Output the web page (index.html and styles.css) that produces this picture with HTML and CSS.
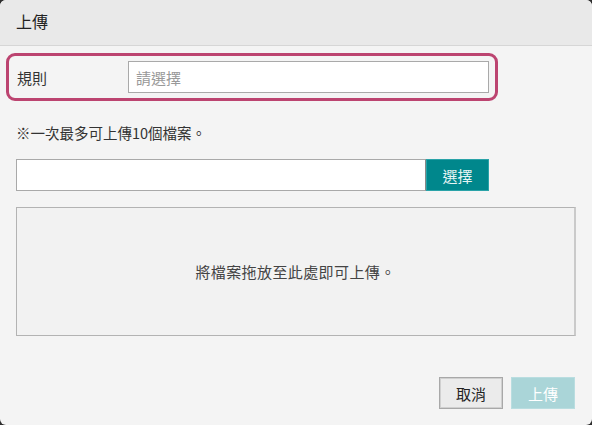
FILE: index.html
```html
<!DOCTYPE html>
<html lang="zh-Hant">
<head>
<meta charset="utf-8">
<title>上傳</title>
<link rel="stylesheet" href="styles.css">
</head>
<body>
<div class="dialog">
  <div class="header"><span class="title">上傳</span></div>
  <div class="content">
    <div class="rule-row">
      <label class="rule-label">規則</label>
      <div class="rule-input">請選擇</div>
    </div>
    <p class="notice">※一次最多可上傳10個檔案。</p>
    <div class="file-row">
      <div class="file-input"></div>
      <button class="choose-btn">選擇</button>
    </div>
    <div class="drop-zone">將檔案拖放至此處即可上傳。</div>
    <div class="footer">
      <button class="btn btn-cancel">取消</button>
      <button class="btn btn-upload">上傳</button>
    </div>
  </div>
</div>
</body>
</html>
```
FILE: styles.css
```css
* { box-sizing: border-box; }
html, body { margin: 0; padding: 0; background: #2e2e2e; }
body {
  font-family: "Noto Sans CJK TC", "Liberation Sans", sans-serif;
  color: #333;
}
.dialog {
  width: 592px;
  height: 425px;
  background: #f4f4f4;
  border-radius: 6px;
  overflow: hidden;
  display: flex;
  flex-direction: column;
}
.header {
  height: 46px;
  background: #e9e9e9;
  border-bottom: 1px solid #d6d6d6;
  display: flex;
  align-items: center;
  padding-left: 16px;
  padding-bottom: 3px;
}
.title { font-size: 16px; color: #222; }
.content {
  padding: 7px 16px 0 16px;
  display: flex;
  flex-direction: column;
}
.rule-row {
  margin-left: -10px;
  width: 492px;
  height: 48px;
  border: 3px solid #bc4470;
  border-radius: 9px;
  display: flex;
  align-items: center;
  padding: 0 6px 0 8px;
}
.rule-label { width: 111px; font-size: 15px; color: #333; }
.rule-input {
  flex: 1;
  height: 32px;
  background: #fff;
  border: 1px solid #a9a9a9;
  font-size: 15px;
  color: #999;
  display: flex;
  align-items: center;
  padding-left: 7px;
}
.notice {
  margin: 22px 0 0 0;
  height: 20px;
  line-height: 20px;
  font-size: 14.5px;
  color: #333;
}
.file-row {
  margin-top: 16px;
  display: flex;
  height: 32px;
}
.file-input {
  width: 410px;
  background: #fff;
  border: 1px solid #a9a9a9;
  border-right-color: #888;
}
.choose-btn {
  width: 63px;
  border: 1px solid #2aa3a8;
  background: #00878c;
  color: #e6f4f4;
  font-family: inherit;
  font-size: 15px;
  font-weight: normal;
  padding: 0;
}
.drop-zone {
  margin-top: 16px;
  width: 560px;
  height: 129px;
  background: #f2f2f2;
  border: 1px solid #b3b3b3;
  border-right: 2px solid #cacaca;
  display: flex;
  align-items: center;
  justify-content: center;
  font-size: 15px;
  letter-spacing: 0.4px;
  color: #444;
}
.footer {
  margin-top: 41px;
  display: flex;
  justify-content: flex-end;
  gap: 8px;
  padding-right: 1px;
}
.btn {
  height: 32px;
  width: 64px;
  font-family: inherit;
  font-size: 15px;
  padding: 0;
}
.btn-cancel {
  background: #ebebeb;
  border: 1px solid #a8a8a8;
  box-shadow: inset 0 0 0 1px #d0d0d0;
  color: #222;
}
.btn-upload {
  background: #aad5d8;
  border: 1px solid #b9dde0;
  color: #fff;
}
```
